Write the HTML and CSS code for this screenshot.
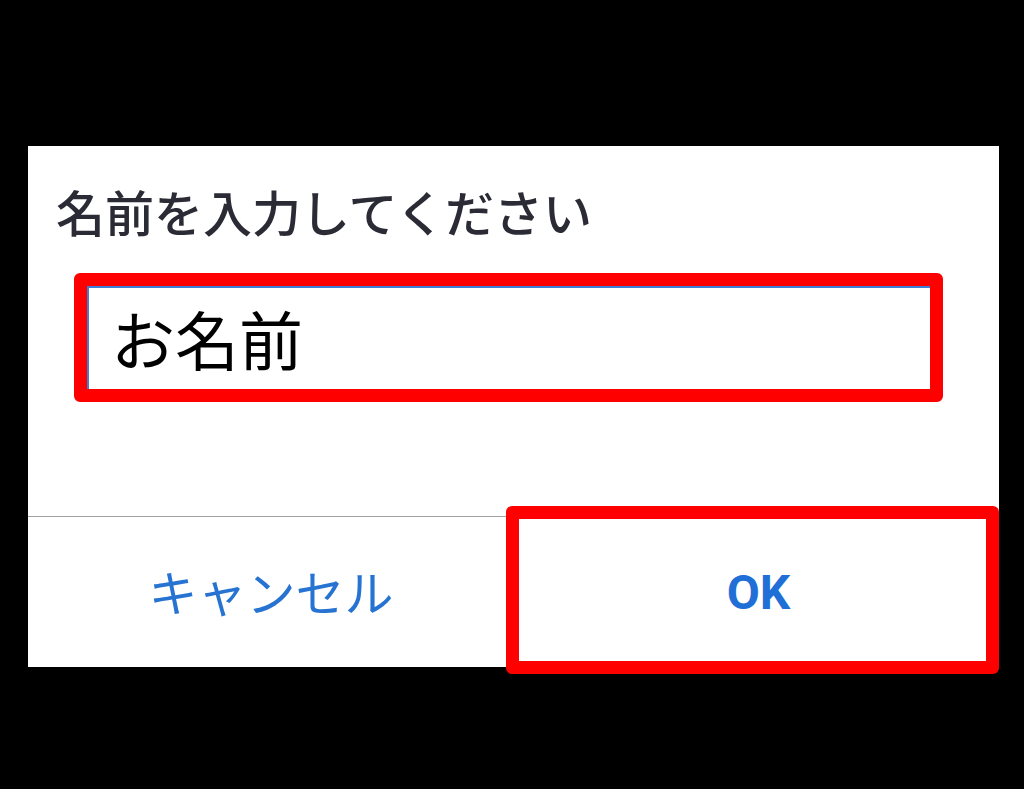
FILE: index.html
```html
<!DOCTYPE html>
<html lang="ja">
<head>
  <meta charset="UTF-8">
  <title>名前を入力してください</title>
  <meta name="viewport" content="width=device-width, initial-scale=1">
  <link rel="stylesheet" href="styles.css">
</head>
<body>

  <div class="dialog">
    <h2 class="dialog-title">名前を入力してください</h2>

    <div class="mark mark-input">
      <input type="text" class="name-input" value="お名前">
    </div>

    <div class="actions">
      <button type="button" class="btn btn-cancel">キャンセル</button>
      <button type="button" class="btn btn-ok">OK</button>
    </div>

    <span class="mark mark-ok"></span>
  </div>

</body>
</html>
```

FILE: styles.css
```css
* {
  margin: 0;
  padding: 0;
  box-sizing: border-box;
}

body {
  background: #000;
  font-family: "Noto Sans CJK JP", "Noto Sans", sans-serif;
  min-height: 100vh;
  padding: 146px 0 0 28px;
}

.dialog {
  position: relative;
  width: 971px;
  height: 521px;
  background: #fff;
  display: flex;
  flex-direction: column;
}

.dialog-title {
  margin: 38px 0 0 28px;
  font-size: 49px;
  line-height: 54px;
  font-weight: 500;
  color: #2b2b36;
}

/* red annotation frames */
.mark {
  border: 13px solid #ff0000;
  border-radius: 6px;
}

.mark-input {
  margin: 35px 0 0 46px;
  width: 869px;
  height: 129px;
}

.name-input {
  display: block;
  width: 100%;
  height: 100%;
  border: none;
  border-top: 2px solid #3f7dd6;
  border-left: 2px solid #3f7dd6;
  padding: 0 0 4px 22px;
  font-family: "Noto Sans CJK JP", "Noto Sans", sans-serif;
  font-size: 64px;
  color: #000;
  background: #fff;
  outline: none;
}

.actions {
  margin-top: auto;
  height: 151px;
  border-top: 1.5px solid #a2a2a2;
  display: grid;
  grid-template-columns: 486px 1fr;
}

.btn {
  background: none;
  border: none;
  color: #1f6fd6;
  display: flex;
  align-items: center;
  justify-content: center;
  cursor: pointer;
}

.btn-cancel {
  font-family: "Noto Sans CJK JP", "Noto Sans", sans-serif;
  font-size: 49px;
  color: #2673d2;
  padding-bottom: 4px;
}

.btn-ok {
  font-family: Roboto, "Liberation Sans", sans-serif;
  font-weight: bold;
  font-size: 48px;
  padding: 0 0 0 4px;
}

.mark-ok {
  position: absolute;
  left: 478px;
  top: 360px;
  width: 493px;
  height: 168px;
}
```
